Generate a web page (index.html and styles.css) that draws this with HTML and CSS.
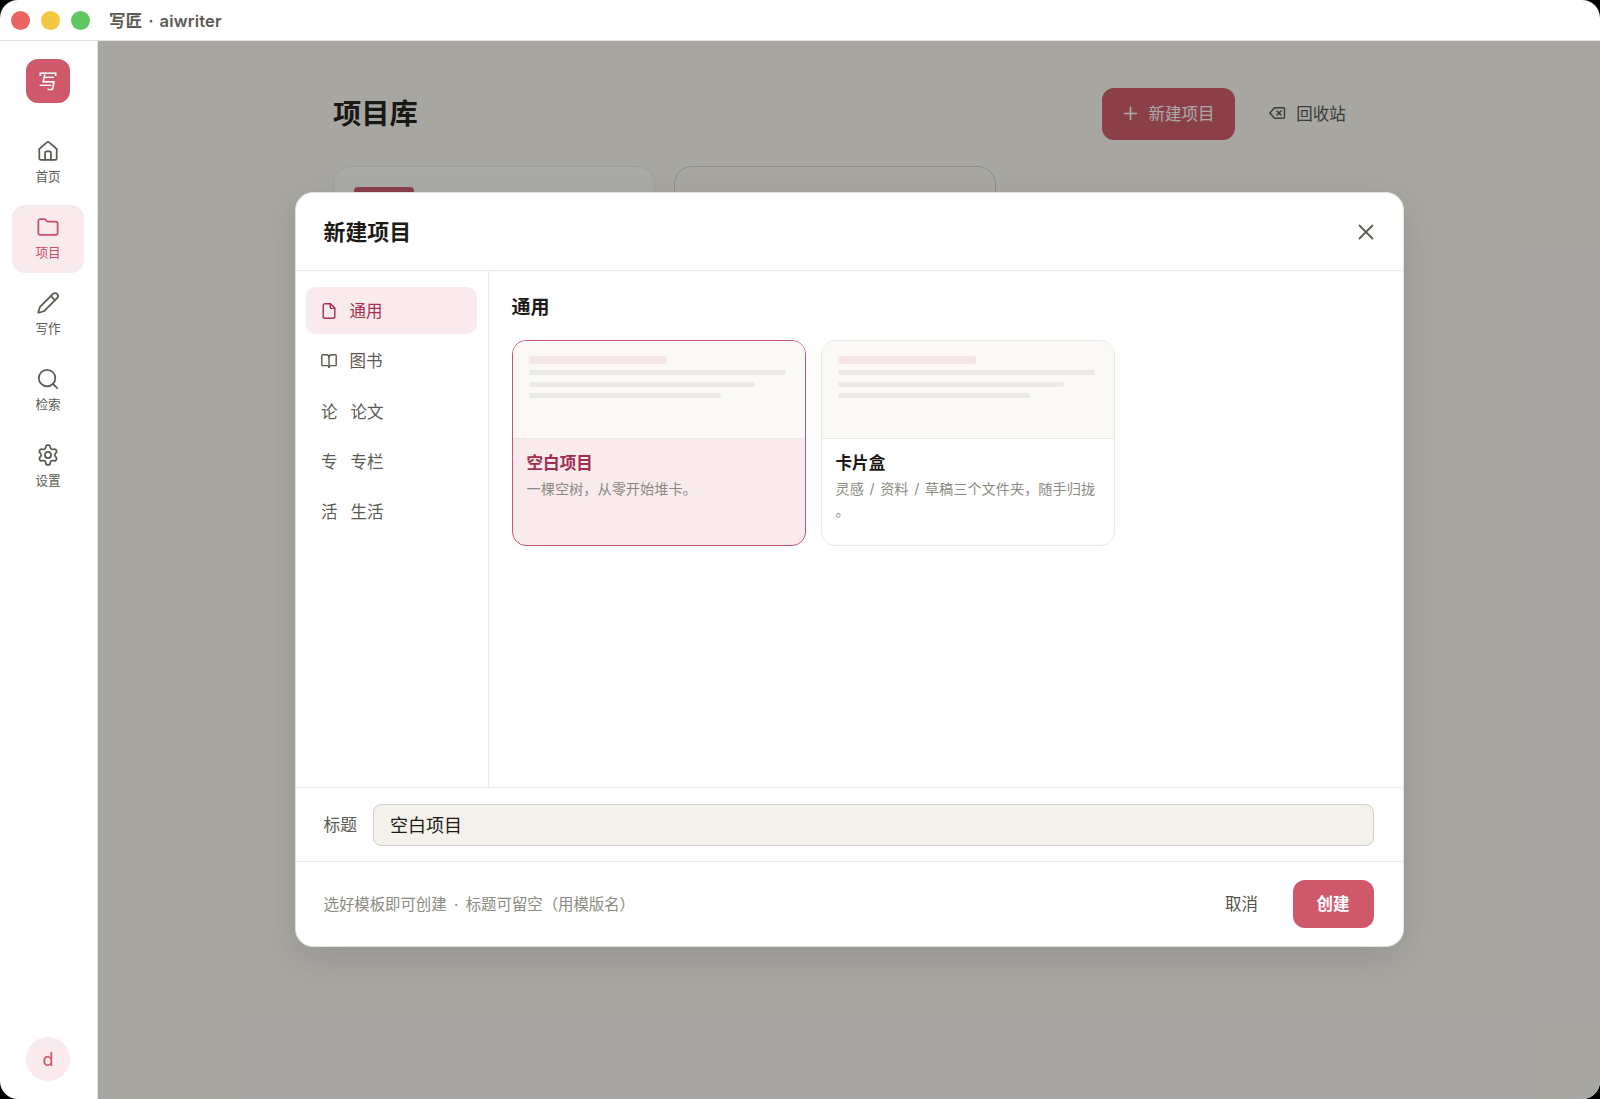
FILE: index.html
```html
<!DOCTYPE html>
<html lang="zh-CN">
<head>
    <meta charset="UTF-8">
    <meta name="viewport" content="width=device-width, initial-scale=1.0">
    <title>写匠 · aiwriter</title>
    <link rel="stylesheet" href="styles.css">
</head>
<body>
<div class="window">
    <header class="titlebar">
        <span class="light red"></span>
        <span class="light yellow"></span>
        <span class="light green"></span>
        <span class="app-name">写匠 · aiwriter</span>
    </header>

    <div class="workspace">
        <nav class="sidebar">
            <div class="logo">写</div>
            <a class="nav-item">
                <svg class="icon" viewBox="0 0 24 24"><path d="M2.5 9.6 10.8 2.5a1.8 1.8 0 0 1 2.4 0L21.5 9.6V20a1.8 1.8 0 0 1-1.8 1.8H4.3A1.8 1.8 0 0 1 2.5 20z"/><path d="M8.8 21.500V14a1.500 1.500 0 0 1 1.500-1.500h3.400a1.500 1.500 0 0 1 1.500 1.500v7.500"/></svg>
                <span>首页</span>
            </a>
            <a class="nav-item active">
                <svg class="icon" viewBox="0 0 24 24"><path d="M20.500 20.500a2 2 0 0 0 2-2V8.200a2 2 0 0 0-2-2h-8.500a2 2 0 0 1-1.700-.9L9.600 4.200A2 2 0 0 0 7.900 3.300H3.500a2 2 0 0 0-2 2v13.200a2 2 0 0 0 2 2z"/></svg>
                <span>项目</span>
            </a>
            <a class="nav-item">
                <svg class="icon" viewBox="0 0 24 24"><path d="M21.900 6.600a3.100 3.100 0 0 0-4.500-4.500L3.500 16a2 2 0 0 0-.5.800L1.400 22a.5.500 0 0 0 .6.600L7.200 21a2 2 0 0 0 .8-.5z"/><path d="m15.200 4.500 4.300 4.300"/></svg>
                <span>写作</span>
            </a>
            <a class="nav-item">
                <svg class="icon" viewBox="0 0 24 24"><circle cx="11" cy="11" r="9"/><path d="m22 22-4.600-4.600"/></svg>
                <span>检索</span>
            </a>
            <a class="nav-item">
                <svg class="icon" viewBox="0 0 24 24"><path d="M9.500 3.600a2.500 2.500 0 0 1 5 0 2.500 2.500 0 0 0 3.600 2.100 2.500 2.500 0 0 1 2.500 4.200 2.500 2.500 0 0 0 0 4.200 2.500 2.500 0 0 1-2.500 4.200 2.500 2.500 0 0 0-3.600 2.100 2.500 2.500 0 0 1-5 0 2.500 2.500 0 0 0-3.600-2.100 2.500 2.500 0 0 1-2.500-4.200 2.500 2.500 0 0 0 0-4.200 2.500 2.500 0 0 1 2.500-4.200 2.500 2.500 0 0 0 3.600-2.100"/><circle cx="12" cy="12" r="3.300"/></svg>
                <span>设置</span>
            </a>
            <div class="avatar">d</div>
        </nav>

        <main class="main">
            <div class="library">
                <div class="library-head">
                    <h1>项目库</h1>
                    <button class="btn btn-new">
                        <svg class="icon-plus" viewBox="0 0 16 16"><path d="M8 1.500v13M1.500 8h13"/></svg>
                        新建项目
                    </button>
                    <button class="btn btn-trash">
                        <svg class="icon-trash" viewBox="0 0 24 24"><path d="M9.500 5H20a2 2 0 0 1 2 2v10a2 2 0 0 1-2 2H9.500a2 2 0 0 1-1.500-.7L2.500 12 8 5.700A2 2 0 0 1 9.500 5z"/><path d="m12 9.300 5.400 5.400M17.400 9.300 12 14.700"/></svg>
                        回收站
                    </button>
                </div>
                <div class="project-grid">
                    <div class="project"><span class="project-tag"></span></div>
                    <div class="project project-empty"></div>
                </div>
            </div>

            <div class="overlay">
                <section class="modal">
                    <header class="modal-head">
                        <h2>新建项目</h2>
                        <svg class="icon-close" viewBox="0 0 16 16"><path d="m1.500 1.500 13 13M14.500 1.500l-13 13"/></svg>
                    </header>

                    <div class="modal-body">
                        <ul class="categories">
                            <li class="selected">
                                <svg class="icon-cat" viewBox="0 0 16 16"><path d="M9.500.8H4A1.800 1.800 0 0 0 2.200 2.600v10.800A1.800 1.800 0 0 0 4 15.200h8a1.800 1.800 0 0 0 1.800-1.800V5.100z"/><path d="M9.300 1v3.200a1.200 1.200 0 0 0 1.200 1.200h3.100"/></svg>
                                <span>通用</span>
                            </li>
                            <li>
                                <svg class="icon-cat" viewBox="0 0 16 16"><path d="M8 3.600v11"/><path d="M1.500 12.600a.7.700 0 0 1-.7-.7V2.500a.7.700 0 0 1 .7-.7h3.800A2.700 2.700 0 0 1 8 4.300a2.700 2.700 0 0 1 2.700-2.500h3.800a.7.700 0 0 1 .7.700v9.400a.7.700 0 0 1-.7.700H10a2 2 0 0 0-2 1.700 2 2 0 0 0-2-1.700z"/></svg>
                                <span>图书</span>
                            </li>
                            <li><span class="glyph">论</span><span>论文</span></li>
                            <li><span class="glyph">专</span><span>专栏</span></li>
                            <li><span class="glyph">活</span><span>生活</span></li>
                        </ul>

                        <div class="templates">
                            <h3>通用</h3>
                            <div class="template-grid">
                                <article class="template chosen">
                                    <div class="preview">
                                        <i class="bar bar-title"></i>
                                        <i class="bar"></i>
                                        <i class="bar bar-mid"></i>
                                        <i class="bar bar-short"></i>
                                    </div>
                                    <div class="template-text">
                                        <h4>空白项目</h4>
                                        <p>一棵空树，从零开始堆卡。</p>
                                    </div>
                                </article>
                                <article class="template">
                                    <div class="preview">
                                        <i class="bar bar-title"></i>
                                        <i class="bar"></i>
                                        <i class="bar bar-mid"></i>
                                        <i class="bar bar-short"></i>
                                    </div>
                                    <div class="template-text">
                                        <h4>卡片盒</h4>
                                        <p>灵感 / 资料 / 草稿三个文件夹，随手归拢<br>。</p>
                                    </div>
                                </article>
                            </div>
                        </div>
                    </div>

                    <div class="title-row">
                        <label for="title">标题</label>
                        <input id="title" type="text" value="空白项目">
                    </div>

                    <footer class="modal-foot">
                        <p>选好模板即可创建 · 标题可留空（用模版名）</p>
                        <button class="btn btn-cancel">取消</button>
                        <button class="btn btn-create">创建</button>
                    </footer>
                </section>
            </div>
        </main>
    </div>
</div>
</body>
</html>
```
FILE: styles.css
```css
* {
    box-sizing: border-box;
}

body {
    margin: 0;
    background: #000;
    color: #1c1b18;
    font-family: Inter, "Noto Sans CJK SC", sans-serif;
    font-size: 16.5px;
}

h1, h2, h3, h4, p, ul {
    margin: 0;
    padding: 0;
}

svg {
    display: block;
    flex: none;
    fill: none;
    stroke: currentColor;
    stroke-linecap: round;
    stroke-linejoin: round;
}

.window {
    display: flex;
    flex-direction: column;
    height: 1099px;
    border-radius: 18px;
    overflow: hidden;
    background: #fff;
}

/* title bar */
.titlebar {
    display: flex;
    align-items: center;
    height: 41px;
    padding-left: 11px;
    border-bottom: 1px solid #e3e2df;
}

.light {
    width: 19px;
    height: 19px;
    margin-right: 11px;
    border-radius: 50%;
}

.red { background: #ec6461; }
.yellow { background: #f3c73f; }
.green { background: #5fc662; }

.app-name {
    margin-left: 8px;
    font-size: 16.5px;
    font-weight: 600;
    letter-spacing: 0.2px;
    word-spacing: 1.5px;
    color: #5b5a55;
}

.workspace {
    display: flex;
    flex: 1;
    min-height: 0;
}

/* left navigation */
.sidebar {
    display: flex;
    flex-direction: column;
    align-items: center;
    width: 98px;
    padding: 18px 1px 18px 0;
    border-right: 1px solid #e3e2df;
}

.logo {
    display: flex;
    align-items: center;
    justify-content: center;
    width: 44px;
    height: 44px;
    margin-bottom: 26px;
    padding-bottom: 2px;
    border-radius: 12px;
    background: #cf596b;
    color: #fff;
    font-size: 20px;
}

.nav-item {
    display: flex;
    flex-direction: column;
    align-items: center;
    gap: 6px;
    width: 72px;
    height: 68px;
    margin-bottom: 8.2px;
    padding-top: 10.5px;
    border-radius: 13px;
    color: #5b5a52;
    font-size: 12.6px;
    line-height: 18px;
}

.nav-item.active {
    background: #f9eaed;
    color: #c84f64;
}

.icon {
    width: 22px;
    height: 22px;
    stroke-width: 1.9;
}

.avatar {
    display: flex;
    align-items: center;
    justify-content: center;
    width: 44px;
    height: 44px;
    margin-top: auto;
    border-radius: 50%;
    background: #f9eaed;
    color: #cb5368;
    font-size: 18px;
}

/* project library */
.main {
    position: relative;
    flex: 1;
    background: #faf9f5;
}

.library {
    width: 1032px;
    margin: 0 auto;
    padding: 46px 3px 0 0;
}

.library-head {
    display: flex;
    align-items: center;
    height: 53px;
    margin-bottom: 26px;
}

.library-head h1 {
    margin-right: auto;
    padding-bottom: 4px;
    font-size: 28.3px;
    font-weight: 600;
}

.btn {
    display: flex;
    align-items: center;
    justify-content: center;
    padding: 0 0 2px;
    border: none;
    border-radius: 12px;
    background: none;
    color: #55544d;
    font: inherit;
    white-space: nowrap;
}

.btn-new {
    gap: 11px;
    width: 133px;
    height: 52px;
    background: #cf596b;
    color: #fff;
}

.icon-plus {
    width: 15px;
    height: 15px;
    margin-top: 1px;
    stroke-width: 1.7;
}

.btn-trash {
    gap: 10px;
    width: 110px;
    height: 52px;
    margin-left: 17px;
}

.icon-trash {
    width: 18px;
    height: 18px;
    margin-top: 1px;
    stroke-width: 2;
}

.project-grid {
    display: flex;
    gap: 19px;
}

.project {
    width: 322px;
    height: 200px;
    padding: 20px;
    border: 1px solid #edece8;
    border-radius: 18px;
    background: #fff;
}

.project-empty {
    border-color: #d3d2cb;
    background: none;
}

.project-tag {
    display: block;
    width: 60px;
    height: 24px;
    border-radius: 4px;
    background: #cf596b;
}

/* new project dialog */
.overlay {
    position: absolute;
    inset: 0;
    display: flex;
    align-items: center;
    justify-content: center;
    padding-bottom: 1px;
    background: rgba(20, 19, 15, 0.36);
}

.modal {
    display: flex;
    flex-direction: column;
    width: 1109px;
    height: 755px;
    border: 1px solid #e3e2df;
    border-radius: 18px;
    background: #fff;
    box-shadow: 0 12px 36px rgba(20, 20, 15, 0.11);
}

.modal-head {
    display: flex;
    align-items: center;
    justify-content: space-between;
    height: 78px;
    padding: 0 29px 0 28px;
    border-bottom: 1px solid #ebeae8;
}

.modal-head h2 {
    padding-bottom: 2px;
    font-size: 21.9px;
    font-weight: 600;
}

.icon-close {
    width: 16px;
    height: 16px;
    color: #5b5a52;
    stroke-width: 1.8;
}

.modal-body {
    display: flex;
    flex: 1;
}

.categories {
    display: flex;
    flex-direction: column;
    gap: 3.3px;
    width: 193px;
    padding: 16px 11px 0 10px;
    border-right: 1px solid #ebeae8;
    list-style: none;
}

.categories li {
    display: flex;
    align-items: center;
    gap: 12.5px;
    height: 47px;
    padding-left: 15.5px;
    border-radius: 10px;
    color: #5b5a52;
}

.categories li span {
    padding-bottom: 1px;
}

.categories .selected {
    background: #f9eaed;
    color: #a9304e;
}

.icon-cat {
    width: 16px;
    height: 16px;
    stroke-width: 1.4;
}

.categories .glyph {
    width: 17px;
}

.templates {
    padding: 22px 23px;
}

.templates h3 {
    height: 28px;
    margin-bottom: 18.5px;
    font-size: 19px;
    font-weight: 600;
    line-height: 30px;
}

.template-grid {
    display: flex;
    gap: 15px;
}

.template {
    width: 294px;
    height: 206px;
    border: 1px solid #e9e8e5;
    border-radius: 14px;
    overflow: hidden;
}

.template.chosen {
    border-color: #c95570;
    background: #f9eaed;
}

.preview {
    display: flex;
    flex-direction: column;
    gap: 6.5px;
    height: 98px;
    padding: 15px 19px 0 16px;
    border-bottom: 1px solid #e9e7e4;
    background: #faf9f5;
}

.bar {
    height: 5px;
    border-radius: 3px;
    background: #ebeae4;
}

.bar-title {
    width: 54%;
    height: 8px;
    background: #f6e5e6;
}

.bar-mid { width: 88%; }
.bar-short { width: 75%; }

.template-text {
    padding: 12px 14px;
}

.template-text h4 {
    font-size: 16.6px;
    font-weight: 600;
    line-height: 24px;
}

.template-text p {
    margin-top: 3px;
    color: #8b8a81;
    font-size: 14.2px;
    line-height: 22.5px;
    word-spacing: 1.6px;
    white-space: nowrap;
}

.chosen h4 {
    color: #a0304e;
}

.title-row {
    display: flex;
    align-items: center;
    gap: 16px;
    height: 74px;
    padding: 0 29px 0 28px;
    border-top: 1px solid #ebeae8;
    color: #5b5a52;
}

.title-row label {
    padding-bottom: 1px;
    font-size: 16.8px;
}

.title-row input {
    flex: 1;
    height: 42px;
    padding: 0 16px 1px;
    border: 1px solid #cfcec9;
    border-radius: 8px;
    background: #f4f1ea;
    color: #1c1b18;
    font: inherit;
    font-size: 18px;
}

.modal-foot {
    display: flex;
    align-items: center;
    height: 85px;
    padding: 0 29px 0 28px;
    border-top: 1px solid #ebeae8;
}

.modal-foot p {
    margin-right: auto;
    padding-bottom: 2px;
    color: #8b8a81;
    font-size: 15.4px;
    word-spacing: 3px;
}

.btn-cancel {
    width: 80px;
    height: 48px;
    margin-right: 11px;
}

.btn-create {
    width: 81px;
    height: 48px;
    background: #cf596b;
    color: #fff;
    font-weight: 600;
}
```
